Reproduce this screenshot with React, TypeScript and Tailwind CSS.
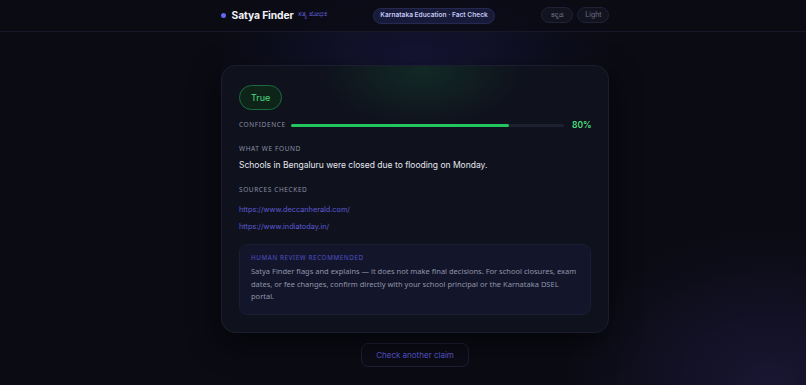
import React from "react";

const sans = { fontFamily: "Inter, 'Noto Sans', sans-serif" };
const body = { fontFamily: "'Noto Sans', Inter, sans-serif" };

export default function App() {
  return (
    <div
      className="relative w-[806px] h-[385px] overflow-hidden bg-[#0a0b13] text-white"
      style={sans}
    >
      {/* background glows */}
      <div className="pointer-events-none absolute left-[215px] top-[-40px] w-[400px] h-[200px] rounded-full bg-[radial-gradient(ellipse_at_center,rgba(79,70,229,0.16),rgba(79,70,229,0)_70%)]" />
      <div className="pointer-events-none absolute left-[560px] top-[230px] w-[420px] h-[300px] rounded-full bg-[radial-gradient(ellipse_at_center,rgba(76,60,160,0.22),rgba(76,60,160,0)_70%)]" />

      {/* header */}
      <header className="relative h-[32px] border-b border-[#171827] bg-[#0b0b15]/80">
        <div className="flex h-full justify-center pl-[23px]">
          <div className="flex w-[390px] items-center justify-between">
            <div className="flex items-center">
              <span className="ml-[1px] h-[5px] w-[5px] rounded-full bg-[#6366f1]" />
              <span className="ml-[6px] text-[10.3px] font-bold leading-none tracking-[-0.1px] text-[#f1f2f8]">
                Satya Finder
              </span>
              <span className="ml-[4px] -mt-[3px] text-[7px] leading-none text-[#6d6ee8]">
                ಸತ್ಯ ಶೋಧಕ
              </span>
            </div>
            <div className="flex h-[16px] items-center rounded-full border border-[#262a52] bg-[#181a3a] px-[6px] text-[6.6px] font-semibold leading-none text-[#c3c8f0]">
              Karnataka Education · Fact Check
            </div>
            <div className="flex items-center gap-[4px] -mt-[2px]">
              <div className="flex h-[16px] w-[32px] items-center justify-center rounded-full border border-[#1f2136] bg-[#12131f] text-[7px] leading-none text-[#8c8fa8]">
                ಕನ್ನಡ
              </div>
              <div className="flex h-[16px] w-[32px] items-center justify-center rounded-full border border-[#1f2136] bg-[#12131f] text-[7px] leading-none text-[#6c6f86]">
                Light
              </div>
            </div>
          </div>
        </div>
      </header>

      {/* main */}
      <main className="relative flex flex-col items-center pl-[24px] pt-[33px]">
        <div className="relative w-[388px] overflow-hidden rounded-[14px] border border-[#1b1e2e] bg-[#0f121d] px-[17px] pt-[17px] pb-[17px] shadow-[0_10px_30px_rgba(0,0,0,0.5)]">
          <div className="pointer-events-none absolute left-[100px] top-[-50px] h-[110px] w-[200px] rounded-full bg-[radial-gradient(ellipse_at_center,rgba(34,197,94,0.13),rgba(34,197,94,0)_70%)]" />
          <div className="relative">
            <div className="inline-flex h-[25px] items-center rounded-full border border-[#1b6b40] bg-[#0e2419] px-[11px] text-[9px] leading-none text-[#4ade80]">
              True
            </div>

            <div className="mt-[10px] flex h-[10px] items-center">
              <span className="text-[6.5px] leading-none tracking-[0.6px] text-[#8a8ea4]" style={body}>
                CONFIDENCE
              </span>
              <div className="ml-[5px] h-[3px] flex-1 rounded-full bg-[#1d2030]">
                <div className="h-full rounded-full bg-[#22c55e]" style={{ width: "80%" }} />
              </div>
              <span className="ml-[8px] w-[19px] text-[8.5px] font-semibold leading-none text-[#4ade80]">
                80%
              </span>
            </div>

            <div className="mt-[14px] h-[10px] text-[6.5px] leading-[10px] tracking-[0.6px] text-[#8a8ea4]" style={body}>
              WHAT WE FOUND
            </div>
            <div className="mt-[5px] text-[8.5px] leading-[12px] text-[#e4e6ef]">
              Schools in Bengaluru were closed due to flooding on Monday.
            </div>

            <div className="mt-[14px] h-[10px] text-[6.5px] leading-[10px] tracking-[0.6px] text-[#8a8ea4]" style={body}>
              SOURCES CHECKED
            </div>
            <div className="mt-[9px] text-[7.3px] leading-[12px] text-[#5c5ad8]">
              https://www.deccanherald.com/
            </div>
            <div className="mt-[5px] text-[7.3px] leading-[12px] text-[#5c5ad8]">
              https://www.indiatoday.in/
            </div>

            <div className="mt-[11px] rounded-[8px] border border-[#1a1d33] bg-[#13162b] px-[11px] pt-[8px] pb-[11px]" style={body}>
              <div className="h-[10px] text-[6.3px] leading-[10px] tracking-[0.6px] text-[#4f4fc8]">
                HUMAN REVIEW RECOMMENDED
              </div>
              <p className="mt-[2px] text-[7.5px] leading-[12.5px] text-[#9094a8]">
                Satya Finder flags and explains — it does not make final decisions. For school closures, exam
                dates, or fee changes, confirm directly with your school principal or the Karnataka DSEL
                portal.
              </p>
            </div>
          </div>
        </div>

        <button className="mt-[10px] flex h-[24px] w-[108px] items-center justify-center rounded-[7px] border border-[#1d1f33] bg-[#0b0c16] text-[8px] leading-none text-[#5a58d0]">
          Check another claim
        </button>
      </main>
    </div>
  );
}
